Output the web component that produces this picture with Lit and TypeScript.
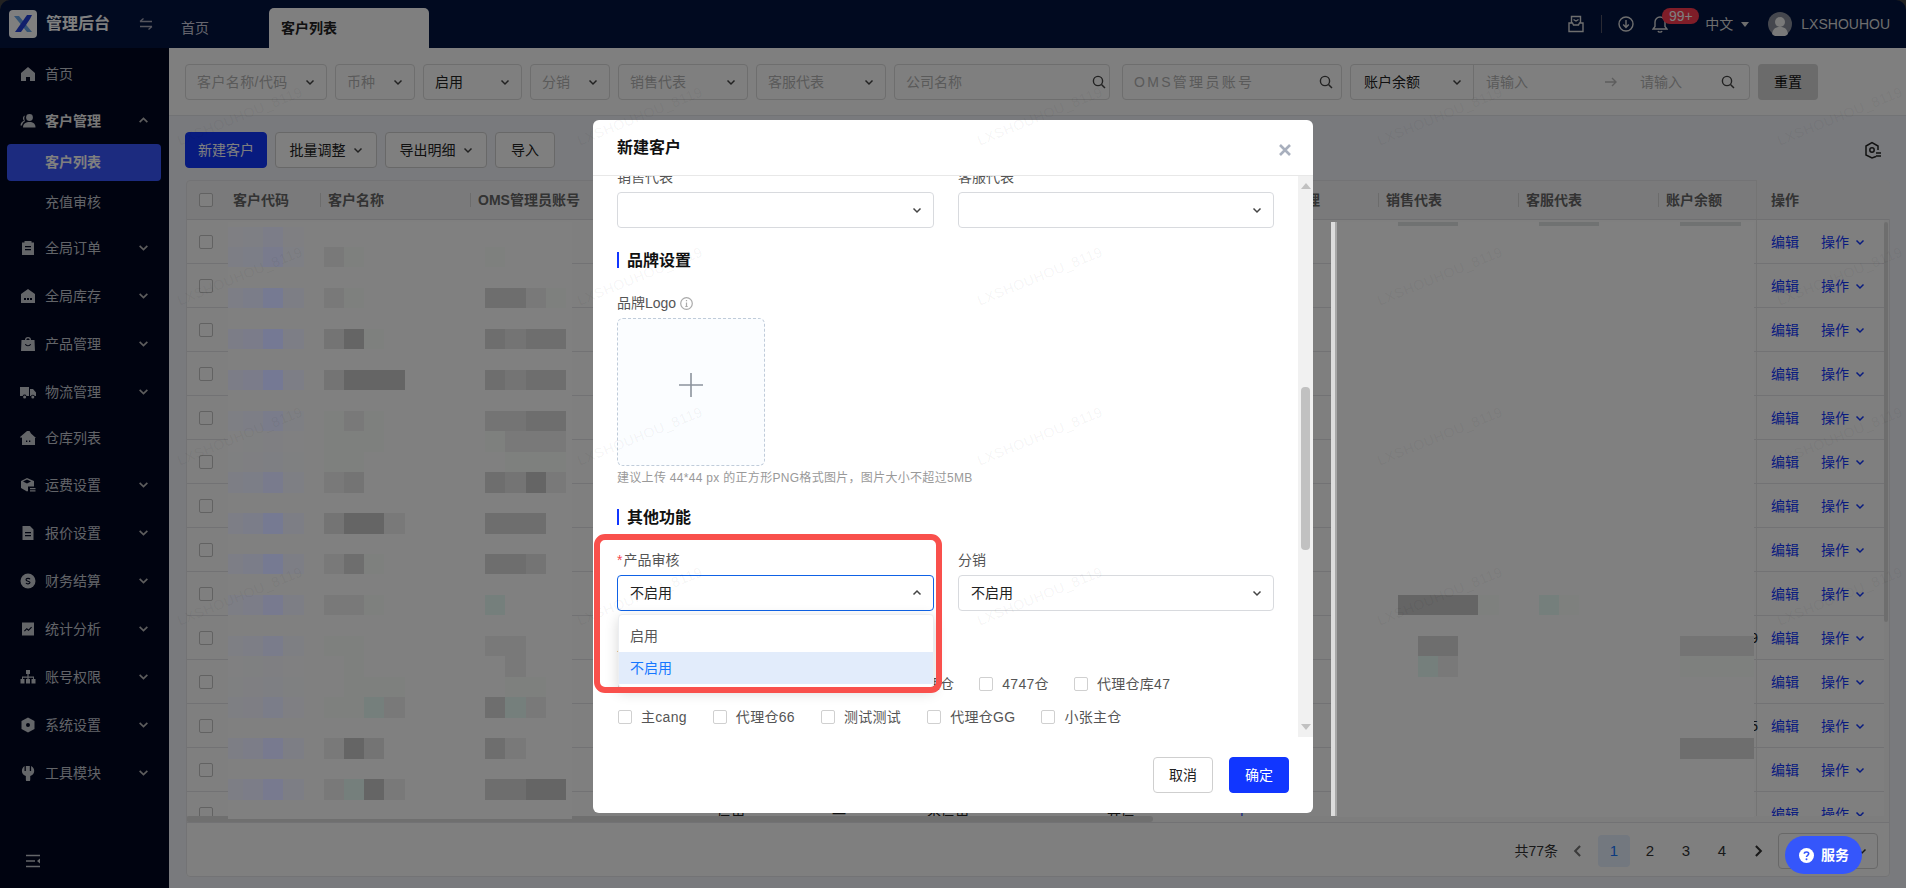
import { LitElement, html, css, svg } from 'lit';
import { customElement } from 'lit/decorators.js';

const chev = (up = false) => html`<svg class="chev" viewBox="0 0 10 10" width="10" height="10">
  <path d=${up ? 'M1.5 6.5 5 3l3.5 3.5' : 'M1.5 3.5 5 7l3.5-3.5'} fill="none" stroke="currentColor" stroke-width="1.5"/>
</svg>`;

const search = html`<svg class="ico" viewBox="0 0 14 14" width="14" height="14">
  <circle cx="6" cy="6" r="4.6" fill="none" stroke="currentColor" stroke-width="1.4"/>
  <path d="M9.5 9.5 13 13" stroke="currentColor" stroke-width="1.5"/>
</svg>`;

// sidebar icons, all filled in a 16 box
const menuIcons: Record<string, unknown> = {
  home: svg`<path d="M8 1 1 7v8h5v-4h4v4h5V7z"/>`,
  user: svg`<circle cx="9.5" cy="4.5" r="3.4"/><path d="M3 14.5c0-4 3-5.5 6.5-5.5s6 1.5 6 5.5z"/><path d="M5 2.500a3 3 0 0 0-1 5.200C2 8.500.5 10 .5 12.500H2c.3-2 1.300-3.200 3-4.300-.8-1.500-1.100-3.500 0-5.700z"/>`,
  order: svg`<path d="M2 2.500h2.500V1h7v1.500H14V15H2zM5 6v1.300h6V6zm0 3v1.300h6V9z" fill-rule="evenodd"/>`,
  stock: svg`<path d="M8 1 1 6v9h14V6zM4 10h2v2H4zm3 0h2v2H7zm3 0h2v2h-2z" fill-rule="evenodd"/>`,
  bag: svg`<path d="M5 4a3 3 0 0 1 6 0h3.500L15 15H1l.5-11zm1.300 0h3.400a1.700 1.700 0 0 0-3.400 0zM5 8c.5 3 5.500 3 6 0h-1c-.5 1.700-3.500 1.700-4 0z" fill-rule="evenodd"/>`,
  truck: svg`<path d="M0 3h9v9H6.500a2 2 0 0 0-3.800 0H0zm10 2h3l3 3.500V12h-1.300a2 2 0 0 0-3.700 0h-1z"/><circle cx="4.600" cy="13" r="1.500"/><circle cx="12.800" cy="13" r="1.500"/>`,
  house: svg`<path d="M7 1 0 7l1 1 1-.8V15h13V8h1L11 3.500 9.500 1zM6 10.500h1.300V12H6zm3 0h1.300V12H9z" fill-rule="evenodd"/>`,
  box: svg`<path d="M7 1 1 4v7l6 3.500 1-.5V9.500h6V4zM7 2.500 11 4.500 7 6.500 3 4.500z" fill-rule="evenodd"/><path d="M10 11h5.500v1.200H10zm0 2.300h5.500v1.200H10z"/>`,
  doc: svg`<path d="M2.500 1H10l3.500 3.500V15h-11zM5 7v1.300h6V7zm0 3v1.300h6V10z" fill-rule="evenodd"/>`,
  coin: svg`<circle cx="8" cy="8" r="7.500"/><path d="M10 6.300C9.500 5 6 5 6 6.800c0 1.900 4 1 4 2.800 0 1.700-3.600 1.600-4 .3" fill="none" stroke="#000620" stroke-width="1.100"/>`,
  chart: svg`<path d="M2 1.500h12v13H2zM4 9.800l.8.700 2-2 1.700 1.500L12 6.500l-.8-.7L8.500 8.500 6.800 7z" fill-rule="evenodd"/>`,
  org: svg`<path d="M6 1h4v4H8.600v2.500H14V10h1.500v4.500h-4V10H13V8.700H8.600V10H10v4.500H6V10h1.400V8.700H3V10h1.500v4.500h-4V10H2V7.500h5.400V5H6z"/>`,
  nut: svg`<path d="M8 .500 14.500 4v8L8 15.500 1.500 12V4zM8 6a2 2 0 1 0 0 4 2 2 0 0 0 0-4z" fill-rule="evenodd"/>`,
  tool: svg`<path d="M4 1v5h1.500V1H6v0h4v5h1.500V1C14 2 15 4 15 6c0 2.500-2 4.500-4.500 5v3.500a2.500 2.500 0 0 1-5 0V11C3 10.500 1 8.500 1 6c0-2 1-4 3-5z" transform="translate(1 0) scale(.88 1)"/>`,
};

const menu = [
  { icon: 'home', label: '首页', tight: true },
  { icon: 'user', label: '客户管理', open: true, tight: true },
  { label: '客户列表', sub: true, active: true },
  { label: '充值审核', sub: true },
  { icon: 'order', label: '全局订单', arrow: true },
  { icon: 'stock', label: '全局库存', arrow: true },
  { icon: 'bag', label: '产品管理', arrow: true },
  { icon: 'truck', label: '物流管理', arrow: true },
  { icon: 'house', label: '仓库列表', short: true },
  { icon: 'box', label: '运费设置', arrow: true },
  { icon: 'doc', label: '报价设置', arrow: true },
  { icon: 'coin', label: '财务结算', arrow: true },
  { icon: 'chart', label: '统计分析', arrow: true },
  { icon: 'org', label: '账号权限', arrow: true },
  { icon: 'nut', label: '系统设置', arrow: true },
  { icon: 'tool', label: '工具模块', arrow: true },
];

const columns = [
  { w: 95, t: '客户代码' }, { w: 150, t: '客户名称' }, { w: 239, t: 'OMS管理员账号' },
  { w: 115, t: '币种' }, { w: 95, t: '启用' }, { w: 180, t: '分销' }, { w: 133, t: '公司名称' },
  { w: 24, t: '' }, { w: 122, t: '销售经理' }, { w: 140, t: '销售代表' }, { w: 140, t: '客服代表' },
  { w: 98, t: '账户余额' },
];

// only the last row peeks out from under the modal
const lastRow = ['', '', '', '启用', '一', '不启用', '开启', '|', '', '', '', ''];

// mosaic levels as they show on the final picture, above the page mask
const levels: Record<string, string> = {
  '1': '#7e807e', '2': '#797979', '3': '#747474', '4': '#6e6e6e', '5': '#656565', '6': '#757f7c',
};

const blend = (a: number) => {
  const r = Math.round(128 + (116 - 128) * a);
  const g = Math.round(128 + (120 - 128) * a);
  const b = Math.round(128 + (150 - 128) * a);
  return `rgb(${r},${g},${b})`;
};

const leftRows: [number, number, string, string][] = [
  [0, 0.35, '0000', '0000'], [1, 0.6, '2100', '1000'], [3, 0.8, '2100', '4421'], [5, 0.9, '3510', '4344'],
  [7, 0.9, '3555', '4344'], [9, 0.5, '1210', '3344'], [10, 0.1, '1110', '1222'], [11, 0.15, '1100', '0111'],
  [12, 0.6, '2300', '4352'], [14, 0.8, '3552', '4440'], [16, 0.8, '2410', '4430'], [18, 0.7, '2210', '6000'],
  [20, 0.5, '1100', '2200'], [21, 0.1, '0100', '0200'], [22, 0.15, '0111', '0110'], [23, 0.4, '1162', '4620'],
  [25, 0.7, '2530', '4200'], [27, 0.7, '2652', '4455'],
];

const rightCells: [number, number, number, string][] = [
  [18, 3, 4, '5'], [18, 7, 1, '1'], [18, 10, 1, '6'], [18, 11, 1, '1'],
  [20, 4, 2, '4'], [21, 4, 1, '6'], [21, 5, 1, '2'],
  [20, 17, 4, '3'], [21, 17, 4, '1'], [25, 17, 4, '4'],
];

@customElement('app-root')
export class AppRoot extends LitElement {
  static styles = css`
    :host {
      display: block;
      position: relative;
      height: 888px;
      width: 1906px;
      overflow: hidden;
      background: #444;
      font-family: "Liberation Sans", "Noto Sans CJK SC", sans-serif;
      font-size: 14px;
      line-height: 22px;
      color: #303133;
    }
    svg { display: block; flex: none; }

    .shell { display: flex; flex-direction: column; height: 888px; }

    /* top bar */
    .top {
      height: 48px;
      flex: none;
      display: flex;
      background: #021440;
      border-radius: 10px 10px 0 0;
      color: #fff;
    }
    .logo { margin: 10px 9px 10px 9px; }
    .brand { width: 78px; font-size: 16px; font-weight: 700; line-height: 48px; white-space: nowrap; }
    .swap { margin: 17px 0 0 15px; color: #aab; }
    .tabs { display: flex; margin-left: 16px; padding-top: 8px; }
    .tab { padding: 0 12px; height: 40px; line-height: 40px; color: #ccd; width: 100px; box-sizing: border-box; }
    .tab.on { width: 160px; background: #fff; color: #222; font-weight: 700; border-radius: 5px 5px 0 0; }
    .tools { margin-left: auto; display: flex; align-items: center; padding-right: 16px; color: #ddd; }
    .tools .rule { width: 1px; height: 18px; background: #556; margin: 0 16px 0 17px; }
    .bell { position: relative; margin-left: 18px; margin-right: 37px; }
    .badge {
      position: absolute;
      left: 10px;
      top: -7px;
      width: 37px;
      height: 16px;
      border-radius: 8px;
      background: #ff3a50;
      color: #fff;
      font-size: 14px;
      line-height: 16px;
      text-align: center;
    }
    .caret { width: 0; height: 0; border: 4.500px solid transparent; border-top: 5px solid #ddd; border-bottom: 0; margin: 0 19px 0 8px; }
    .avatar { margin-right: 9px; }

    .below { flex: 1; display: flex; min-height: 0; }

    /* sidebar */
    aside { width: 169px; flex: none; background: #000620; color: #c4c8d0; position: relative; padding-top: 2px; box-sizing: border-box; }
    .item { display: flex; align-items: center; height: 48px; padding: 0 20px; position: relative; }
    .item.tight { height: 47px; }
    .item.short { height: 45px; }
    .item .mi { width: 16px; height: 16px; fill: #c8ccd2; margin-right: 9px; }
    .item.open { color: #eee; font-weight: 700; }
    .item .chev { margin-left: auto; margin-right: 0; width: 11px; height: 11px; color: #bbb; }
    .item.sub { height: 43px; padding-left: 45px; }
    .item.sub.on { height: 36.500px; color: #fff; font-weight: 700; }
    .item.sub.on::before {
      content: '';
      position: absolute;
      left: 7px;
      right: 8px;
      top: 0;
      bottom: 0;
      background: #3856ff;
      border-radius: 4px;
      z-index: 0;
    }
    .item.sub span { position: relative; }
    .fold { position: absolute; left: 25px; bottom: 20px; }

    /* main */
    main { flex: 1; min-width: 0; display: flex; flex-direction: column; background: #f3f5fa; }
    .filters {
      height: 68px;
      box-sizing: border-box;
      flex: none;
      background: #fff;
      border-bottom: 1px solid #e4e6ea;
      padding: 16px 0 0 16px;
      display: flex;
      gap: 8px;
    }
    .f {
      height: 36px;
      box-sizing: border-box;
      border: 1px solid #dcdcdc;
      border-radius: 4px;
      background: #fff;
      display: flex;
      align-items: center;
      padding: 0 11px 0 11px;
      color: #b4b4b4;
      white-space: nowrap;
    }
    .f .chev, .f .ico { margin-left: auto; color: #444; }
    .f.val { color: #222; }
    .f.w1 { width: 142px; letter-spacing: 0.400px; }
    .f.w2 { width: 80px; }
    .f.w3 { width: 99px; }
    .f.w4 { width: 130px; }
    .f.w5 { width: 216px; }
    .f.w5 .ico { margin-right: -8px; }
    .f.w6 { width: 220px; margin-left: 4px; letter-spacing: 2.300px; }
    .f.w6 .ico { margin-right: -3px; }
    .f.range { width: 400px; padding: 0; }
    .range .pick { width: 123px; box-sizing: border-box; padding: 0 11px 0 13px; display: flex; align-items: center; color: #222; border-right: 1px solid #dcdcdc; height: 100%; }
    .range .pick .chev { margin-left: auto; }
    .range .from { margin-left: 12px; width: 119px; }
    .range .arrow { margin-right: 23px; color: #bbb; }
    .range .to { width: 76px; }
    .range .ico { margin: 0 14px 0 0; margin-left: auto; }
    .reset { width: 60px; height: 36px; border-radius: 4px; background: #d6d6d6; color: #111; display: flex; align-items: center; justify-content: center; }

    .bar { flex: none; height: 64px; box-sizing: border-box; padding: 16px 16px 12px 16px; display: flex; gap: 8px; align-items: stretch; }
    .btn {
      box-sizing: border-box;
      border: 1px solid #d0d0d0;
      border-radius: 4px;
      background: #fff;
      display: flex;
      align-items: center;
      justify-content: center;
      gap: 7px;
      color: #222;
      height: 36px;
    }
    .btn.b1 { width: 82px; background: #1136ff; border-color: #1136ff; color: #fff; }
    .btn.b2 { width: 102px; }
    .btn.b3 { width: 60px; }
    .btn .chev { color: #444; }
    .gear { margin-left: auto; margin-top: 9px; margin-right: 8px; color: #222; }

    .card {
      margin: 0 16px 0 17px;
      height: 697px;
      flex: none;
      background: #fff;
      border-radius: 4px;
      outline: 1px solid #e6e7ea;
      outline-offset: -1px;
      display: flex;
      flex-direction: column;
      overflow: hidden;
    }
    .thead { display: flex; height: 40px; flex: none; background: #f4f5f7; border-bottom: 1px solid #e0e1e4; box-sizing: border-box; font-weight: 700; color: #666; white-space: nowrap; }
    .cell0 { width: 39px; flex: none; display: flex; align-items: center; padding-left: 13px; box-sizing: border-box; }
    .cb { width: 14px; height: 14px; box-sizing: border-box; border: 1px solid #c4c4c4; border-radius: 2px; background: #fff; flex: none; }
    .hc { flex: none; box-sizing: border-box; padding-left: 8px; line-height: 40px; position: relative; overflow: hidden; }
    .hc.sep::before { content: ''; position: absolute; left: 0; top: 13px; height: 14px; width: 1px; background: #d8d8d8; }
    .hc.ops, .op { width: 134px; flex: none; box-sizing: border-box; padding-left: 14px; background: #f4f5f7; border-left: 1px solid #e8e8e8; }
    .mid { flex: none; height: 596px; display: flex; overflow: hidden; }
    .rows { flex: 1; min-width: 0; }
    .row { display: flex; height: 44px; box-sizing: border-box; border-bottom: 1px solid #e4e5e8; white-space: nowrap; }
    .c { flex: none; box-sizing: border-box; padding-left: 8px; line-height: 44px; color: #222; }
    .c.num { padding: 0; text-align: right; position: relative; }
    .c.num span { margin-right: -2px; position: relative; }
    .c.link { color: #1136ff; }
    .row .op { width: 128px; background: #fff; display: flex; align-items: center; color: #1136ff; padding-left: 14px; }
    .op .edit { margin-right: 22px; }
    .op .chev { margin-left: 6px; }
    .vtrack { width: 6px; flex: none; background: #fafafa; }
    .vthumb { width: 4px; height: 400px; margin-top: 2px; background: #ddd; border-radius: 2px; }
    .htrack { height: 6px; flex: none; background: #fafafa; }
    .hthumb { width: 967px; height: 6px; background: #dedede; border-radius: 3px; }
    .pager { flex: 1; display: flex; align-items: center; justify-content: flex-end; gap: 4px; padding: 2px 12px 0 0; border-top: 1px solid #e4e5e8; color: #333; }
    .pg { width: 32px; height: 32px; display: flex; align-items: center; justify-content: center; border-radius: 4px; font-size: 15px; }
    .pg.on { background: #e6f0ff; color: #1677ff; }
    .pg .chev { width: 14px; height: 14px; }
    .size { width: 100px; height: 36px; box-sizing: border-box; border: 1px solid #d0d0d0; border-radius: 4px; display: flex; align-items: center; padding: 0 10px; }
    .size .chev { margin-left: auto; }

    /* mask and the pixelated parts that sit above it */
    .mask { position: absolute; inset: 0; background: rgba(0, 0, 0, 0.5); }
    .mos {
      position: absolute;
      top: 221.500px;
      background: #808080;
      display: grid;
      grid-template-rows: 5px repeat(29, 20.470px);
      overflow: hidden;
    }
    .mos.l { left: 228px; width: 344px; height: 597px; grid-template-columns: 15px repeat(17, 20.200px); }
    .mos.r { left: 1337px; width: 417px; height: 595px; grid-template-columns: repeat(21, 20.200px); }
    .strip { position: absolute; left: 1331px; top: 222px; width: 6px; height: 594px; background: linear-gradient(90deg, #dddddd 0 4.500px, #a8a8a8 4.500px); }

    /* modal */
    .modal {
      position: absolute;
      left: 593px;
      top: 120px;
      width: 720px;
      height: 693px;
      background: #fff;
      border-radius: 6px;
      display: flex;
      flex-direction: column;
      overflow: hidden;
    }
    .mhead { height: 56px; flex: none; box-sizing: border-box; border-bottom: 1px solid #e8e8e8; display: flex; align-items: center; padding: 0 22px 0 24px; }
    .mhead b { font-size: 16px; color: #111; }
    .mhead svg { margin-left: auto; margin-top: 4px; }
    .mbody { height: 561px; flex: none; display: flex; }
    .form { flex: 1; min-width: 0; padding-left: 24px; overflow: hidden; position: relative; }
    .form > :first-child { margin-top: -10px; }
    .two { display: grid; grid-template-columns: 317px 316px; column-gap: 24px; }
    .lab { height: 22px; margin-bottom: 4px; color: #555; white-space: nowrap; display: flex; align-items: center; }
    .lab em { font-style: normal; color: #f5474f; margin-right: 1px; }
    .lab svg { margin-left: 4px; }
    .sel {
      height: 36px;
      box-sizing: border-box;
      border: 1px solid #d8dade;
      border-radius: 4px;
      display: flex;
      align-items: center;
      padding: 0 11px 0 12px;
      color: #222;
      position: relative;
    }
    .sel .chev { margin-left: auto; color: #444; }
    .sel.focus { border-color: #0f62e6; }
    .drop {
      position: absolute;
      left: 0;
      top: 38px;
      width: 316px;
      height: 74px;
      box-sizing: border-box;
      padding: 5px 0;
      background: #fff;
      border: 1px solid #eceef1;
      border-radius: 4px;
      box-shadow: 0 4px 14px rgba(0, 0, 0, 0.16);
      z-index: 2;
    }
    .opt { height: 32px; line-height: 32px; padding-left: 11px; color: #555; }
    .opt.on { background: #e2ecfb; color: #1677ff; }
    .sec { height: 16px; margin-top: 24px; border-left: 2px solid #1136ff; padding-left: 8px; font-size: 16px; font-weight: 700; line-height: 17px; color: #111; }
    .sec + .lab, .sec + .two { margin-top: 24px; }
    .upload {
      width: 148px;
      height: 148px;
      box-sizing: border-box;
      border: 1px dashed #c0ccda;
      border-radius: 6px;
      background: #fbfdff;
      display: flex;
      align-items: center;
      justify-content: center;
    }
    .upload svg { margin-bottom: 14px; }
    .hint { font-size: 12px; line-height: 20px; color: #999; margin-top: 2px; white-space: nowrap; letter-spacing: 0.300px; }
    .sec.s2 { margin-top: 21px; }
    .lab.wh { margin: 30px 0 10px; }
    .checks { display: flex; gap: 26px; height: 22px; margin-bottom: 11px; color: #555; padding-left: 1px; white-space: nowrap; letter-spacing: 0.300px; }
    .checks.first { gap: 25px; }
    .chk { display: flex; align-items: center; gap: 9px; }
    .chk .cb { border-color: #d0d0d0; }
    .sb { width: 15px; flex: none; background: #f1f1f1; display: flex; flex-direction: column; align-items: center; }
    .tri { width: 0; height: 0; border: 5px solid transparent; margin-top: 7px; border-bottom: 6px solid #c1c1c1; border-top: 0; }
    .thumb { width: 9px; height: 163px; margin-top: 198px; background: #c1c1c1; border-radius: 4px; }
    .tri.dn { margin-top: auto; margin-bottom: 7px; border-bottom: 0; border-top: 6px solid #c1c1c1; }
    .mfoot { flex: 1; display: flex; justify-content: flex-end; gap: 16px; padding: 20px 24px 0 0; }
    .mbtn { width: 60px; height: 36px; box-sizing: border-box; border: 1px solid #cfcfcf; border-radius: 4px; display: flex; align-items: center; justify-content: center; color: #222; }
    .mbtn.ok { background: #1136ff; border-color: #1136ff; color: #fff; }
    .callout {
      position: absolute;
      left: 1px;
      top: 414px;
      width: 348px;
      height: 159px;
      box-sizing: border-box;
      border: 6px solid #f9504c;
      border-radius: 11px;
      z-index: 3;
    }

    /* watermark */
    .marks {
      position: absolute;
      inset: 0;
      padding: 36px 0 0 40px;
      display: grid;
      grid-template-columns: repeat(5, 400px);
      grid-auto-rows: 160px;
      pointer-events: none;
      overflow: hidden;
    }
    .marks span {
      align-self: center;
      justify-self: center;
      transform: rotate(-22deg);
      font-size: 14px;
      letter-spacing: 0.500px;
      color: rgba(0, 0, 0, 0.055);
      white-space: nowrap;
    }

    .help {
      position: absolute;
      left: 1785px;
      top: 836px;
      width: 77px;
      height: 38px;
      border-radius: 19px;
      background: #3556fb;
      color: #fff;
      font-weight: 700;
      display: flex;
      align-items: center;
      padding-left: 14px;
      box-sizing: border-box;
      gap: 7px;
    }
  `;

  private _sidebar() {
    return html`<aside>
      ${menu.map(m => html`
        <div class="item ${m.sub ? 'sub' : ''} ${m.active ? 'on' : ''} ${m.open ? 'open' : ''} ${m.tight ? 'tight' : ''} ${m.short ? 'short' : ''}">
          ${m.icon ? html`<svg class="mi" viewBox="0 0 16 16">${menuIcons[m.icon]}</svg>` : ''}
          <span>${m.label}</span>
          ${m.open ? chev(true) : m.arrow ? chev() : ''}
        </div>
      `)}
      <svg class="fold" width="16" height="14" viewBox="0 0 16 14">
        <path d="M1 1.500h14M1 7h9M1 12.500h14" stroke="#c8ccd2" stroke-width="1.600"/>
        <path d="M15 4.500v5L12 7z" fill="#c8ccd2"/>
      </svg>
    </aside>`;
  }

  private _top() {
    return html`<header class="top">
      <svg class="logo" width="28" height="28" viewBox="0 0 28 28">
        <rect width="28" height="28" rx="4" fill="#fff"/>
        <path d="M5 6h5l13 16h-5z" fill="#6aa6e8"/>
        <path d="M23 5h-5L6 22h6l5-7 4-6z" fill="#2340d8"/>
        <path d="M16 19l2-2 4 5h-3z" fill="#6aa6e8"/>
      </svg>
      <div class="brand">管理后台</div>
      <svg class="swap" width="14" height="14" viewBox="0 0 14 14">
        <path d="M1 4.500h12M1 4.500 4.500 1.500M13 9.500H1M13 9.500l-3.500 3" fill="none" stroke="currentColor" stroke-width="1.300"/>
      </svg>
      <div class="tabs">
        <div class="tab">首页</div>
        <div class="tab on">客户列表</div>
      </div>
      <div class="tools">
        <svg width="16" height="18" viewBox="0 0 16 18">
          <path d="M3.500 8V1.500h9V8M5.500 4.500 8 6l2.500-1.500M1 8h3.500l1 2h5l1-2H15v8.500H1z" fill="none" stroke="currentColor" stroke-width="1.400"/>
        </svg>
        <div class="rule"></div>
        <svg width="16" height="18" viewBox="0 0 16 18">
          <circle cx="8" cy="9" r="7" fill="none" stroke="currentColor" stroke-width="1.400"/>
          <path d="M8 5v7M5.200 9.500 8 12.500l2.800-3" fill="none" stroke="currentColor" stroke-width="1.400"/>
        </svg>
        <div class="bell">
          <svg width="16" height="18" viewBox="0 0 16 18">
            <path d="M1 14h14l-2-2.500V7A5 5 0 0 0 3 7v4.500zM6 16c.5 1.500 3.500 1.500 4 0" fill="none" stroke="currentColor" stroke-width="1.400"/>
          </svg>
          <div class="badge">99+</div>
        </div>
        <span>中文</span>
        <div class="caret"></div>
        <svg class="avatar" width="24" height="24" viewBox="0 0 24 24">
          <circle cx="12" cy="12" r="12" fill="#8a8f9c"/>
          <circle cx="12" cy="10" r="5" fill="#f2f2f2"/>
          <path d="M4 22c1-6 4-7 8-7s7 1 8 7a12 12 0 0 1-16 0z" fill="#f2f2f2"/>
        </svg>
        <span>LXSHOUHOU</span>
      </div>
    </header>`;
  }

  private _filters() {
    return html`<div class="filters">
      <div class="f w1">客户名称/代码${chev()}</div>
      <div class="f w2">币种${chev()}</div>
      <div class="f w3 val">启用${chev()}</div>
      <div class="f w2">分销${chev()}</div>
      <div class="f w4">销售代表${chev()}</div>
      <div class="f w4">客服代表${chev()}</div>
      <div class="f w5">公司名称${search}</div>
      <div class="f w6">OMS管理员账号${search}</div>
      <div class="f range">
        <div class="pick">账户余额${chev()}</div>
        <span class="from">请输入</span>
        <svg class="arrow" width="12" height="10" viewBox="0 0 12 10">
          <path d="M0 5h11M7 1l4 4-4 4" fill="none" stroke="currentColor" stroke-width="1.400"/>
        </svg>
        <span class="to">请输入</span>
        ${search}
      </div>
      <div class="reset">重置</div>
    </div>`;
  }

  private _table() {
    const rows = Array.from({ length: 14 }, (_, i) => i);
    return html`<div class="card">
      <div class="thead">
        <div class="cell0"><div class="cb"></div></div>
        ${columns.map((c, i) => html`<div class="hc ${i > 0 ? 'sep' : ''}" style="width:${c.w}px">${c.t}</div>`)}
        <div class="hc ops">操作</div>
      </div>
      <div class="mid">
        <div class="rows">
          ${rows.map(i => html`<div class="row">
            <div class="cell0"><div class="cb"></div></div>
            ${columns.map((c, j) => {
              if (j === 11) {
                const v = i === 9 ? '1299' : i === 11 ? '3005' : '';
                return html`<div class="c num" style="width:${c.w}px"><span>${v}</span></div>`;
              }
              const t = i === 13 ? lastRow[j] : '';
              return html`<div class="c ${t === '|' ? 'link' : ''}" style="width:${c.w}px">${t}</div>`;
            })}
            <div class="op"><span class="edit">编辑</span><span>操作</span>${chev()}</div>
          </div>`)}
        </div>
        <div class="vtrack"><div class="vthumb"></div></div>
      </div>
      <div class="htrack"><div class="hthumb"></div></div>
      <div class="pager">
        <span>共77条</span>
        <div class="pg"><svg class="chev" viewBox="0 0 10 10"><path d="M6.500 1.500 3 5l3.500 3.500" fill="none" stroke="#777" stroke-width="1.500"/></svg></div>
        <div class="pg on">1</div>
        <div class="pg">2</div>
        <div class="pg">3</div>
        <div class="pg">4</div>
        <div class="pg"><svg class="chev" viewBox="0 0 10 10"><path d="M3.500 1.500 7 5 3.500 8.500" fill="none" stroke="#333" stroke-width="1.500"/></svg></div>
        <div class="size">20条/页${chev()}</div>
      </div>
    </div>`;
  }

  private _mosaics() {
    const cell = (row: number, col: number, bg: string, span = 1) =>
      html`<i style="grid-row:${row + 2};grid-column:${col + 1} / span ${span};background:${bg}"></i>`;
    return html`
      <div class="mos l">
        ${leftRows.map(([r, blue, name, oms]) => html`
          ${blue ? [cell(r, 0, blend(blue * 0.35)), cell(r, 1, blend(blue * 0.5)), cell(r, 2, blend(blue)), cell(r, 3, blend(blue * 0.3))] : ''}
          ${[...name].map((d, k) => (d === '0' ? '' : cell(r, 5 + k, levels[d])))}
          ${[...oms].map((d, k) => (d === '0' ? '' : cell(r, 13 + k, levels[d])))}
        `)}
      </div>
      <div class="strip"></div>
      <div class="mos r">
        ${[3, 10, 17].map(c => html`<i style="grid-row:1;grid-column:${c + 1} / span 3;background:#707272;margin-bottom:1px"></i>`)}
        ${rightCells.map(([r, c, span, d]) => cell(r, c, levels[d], span))}
      </div>
    `;
  }

  private _modal() {
    const info = html`<svg width="13" height="13" viewBox="0 0 13 13">
      <circle cx="6.500" cy="6.500" r="5.800" fill="none" stroke="#aaa" stroke-width="1.200"/>
      <path d="M6.500 5.500v4M6.500 3v1.300M5.300 9.500h2.400" fill="none" stroke="#aaa" stroke-width="1.200"/>
    </svg>`;
    const check = (t: string) => html`<label class="chk"><div class="cb"></div>${t}</label>`;
    return html`<div class="modal">
      <div class="mhead">
        <b>新建客户</b>
        <svg width="12" height="12" viewBox="0 0 12 12">
          <path d="M1 1l10 10M11 1 1 11" stroke="#a8afbd" stroke-width="2.600"/>
        </svg>
      </div>
      <div class="mbody">
        <div class="form">
          <div class="two">
            <div><div class="lab">销售代表</div><div class="sel">${chev()}</div></div>
            <div><div class="lab">客服代表</div><div class="sel">${chev()}</div></div>
          </div>
          <div class="sec">品牌设置</div>
          <div class="lab">品牌Logo${info}</div>
          <div class="upload">
            <svg width="24" height="24" viewBox="0 0 24 24">
              <path d="M12 0v24M0 12h24" stroke="#8c939d" stroke-width="1.600"/>
            </svg>
          </div>
          <div class="hint">建议上传 44*44 px 的正方形PNG格式图片，图片大小不超过5MB</div>
          <div class="sec s2">其他功能</div>
          <div class="two">
            <div>
              <div class="lab"><em>*</em>产品审核</div>
              <div class="sel focus">不启用${chev(true)}
                <div class="drop">
                  <div class="opt">启用</div>
                  <div class="opt on">不启用</div>
                </div>
              </div>
            </div>
            <div>
              <div class="lab">分销</div>
              <div class="sel">不启用${chev()}</div>
            </div>
          </div>
          <div class="lab wh">仓库权限</div>
          <div class="checks first">
            ${['代理仓库11', '代理仓库22', '海外代理仓', '4747仓', '代理仓库47'].map(check)}
          </div>
          <div class="checks">
            ${['主cang', '代理仓66', '测试测试', '代理仓GG', '小张主仓'].map(check)}
          </div>
        </div>
        <div class="sb">
          <div class="tri"></div>
          <div class="thumb"></div>
          <div class="tri dn"></div>
        </div>
      </div>
      <div class="mfoot">
        <div class="mbtn">取消</div>
        <div class="mbtn ok">确定</div>
      </div>
      <div class="callout"></div>
    </div>`;
  }

  render() {
    return html`
      <div class="shell">
        ${this._top()}
        <div class="below">
          ${this._sidebar()}
          <main>
            ${this._filters()}
            <div class="bar">
              <div class="btn b1">新建客户</div>
              <div class="btn b2">批量调整${chev()}</div>
              <div class="btn b2">导出明细${chev()}</div>
              <div class="btn b3">导入</div>
              <svg class="gear" width="18" height="18" viewBox="0 0 18 18">
                <path d="M12 15.500 8 17 2 14V5l6-3.500L14 5v4" fill="none" stroke="currentColor" stroke-width="1.500"/>
                <circle cx="8" cy="9" r="2.200" fill="none" stroke="currentColor" stroke-width="1.500"/>
                <path d="M12 12h5M12 15h5" stroke="currentColor" stroke-width="1.500"/>
              </svg>
            </div>
            ${this._table()}
          </main>
        </div>
      </div>
      <div class="mask"></div>
      ${this._mosaics()}
      ${this._modal()}
      <div class="marks">
        ${Array.from({ length: 20 }, () => html`<span>LXSHOUHOU_8119</span>`)}
      </div>
      <div class="help">
        <svg width="15" height="15" viewBox="0 0 15 15">
          <circle cx="7.500" cy="7.500" r="7.500" fill="#fff"/>
          <path d="M5.300 5.700C5.500 3.500 9.700 3.500 9.700 5.800 9.700 7.300 7.500 7.300 7.500 9" fill="none" stroke="#3556fb" stroke-width="1.600"/>
          <circle cx="7.500" cy="11.300" r="1" fill="#3556fb"/>
        </svg>
        服务
      </div>
    `;
  }
}
